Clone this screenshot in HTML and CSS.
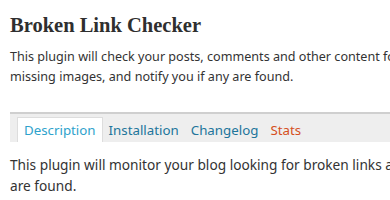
FILE: index.html
```html
<!DOCTYPE html>
<html>
<head>
<meta charset="utf-8">
<link rel="stylesheet" href="styles.css">
</head>
<body>
<div class="page">
  <h1 class="title">Broken Link Checker</h1>
  <p class="intro">This plugin will check your posts, comments and other content for broken links and<br>missing images, and notify you if any are found.</p>
  <div class="tabs">
    <span class="tab active">Description</span>
    <span class="tab">Installation</span>
    <span class="tab">Changelog</span>
    <span class="tab stats">Stats</span>
  </div>
  <p class="body">This plugin will monitor your blog looking for broken links and let you know if any<br>are found.</p>
</div>
</body>
</html>
```
FILE: styles.css
```css
html, body {
  margin: 0;
  padding: 0;
  background: #fff;
  overflow: hidden;
}
.page {
  width: 700px;
  padding: 13px 0 0 10px;
  font-family: "Noto Sans", "Open Sans", sans-serif;
  color: #333;
}
.title {
  margin: 0;
  font-family: "Liberation Serif", "DejaVu Serif", serif;
  font-weight: bold;
  font-size: 20.5px;
  line-height: 24px;
  color: #2f2f2f;
}
.intro {
  margin: 10px 0 0 0;
  font-size: 12.6px;
  line-height: 20px;
  white-space: nowrap;
}
.tabs {
  margin-top: 25px;
  border-top: 2px solid #cfcfcf;
  background: #eee;
  height: 30px;
  display: flex;
  align-items: flex-end;
  padding-left: 7px;
  box-sizing: border-box;
}
.tab {
  font-size: 13.3px;
  line-height: 24px;
  padding: 0 6px;
  color: #21759b;
}
.tab.active {
  background: #fff;
  border: 1px solid #ddd;
  border-bottom: none;
  color: #2ea2cc;
}
.tab.stats {
  color: #d54e21;
}
.body {
  margin: 12px 0 0 0;
  font-size: 13.7px;
  line-height: 21px;
  white-space: nowrap;
}
```
